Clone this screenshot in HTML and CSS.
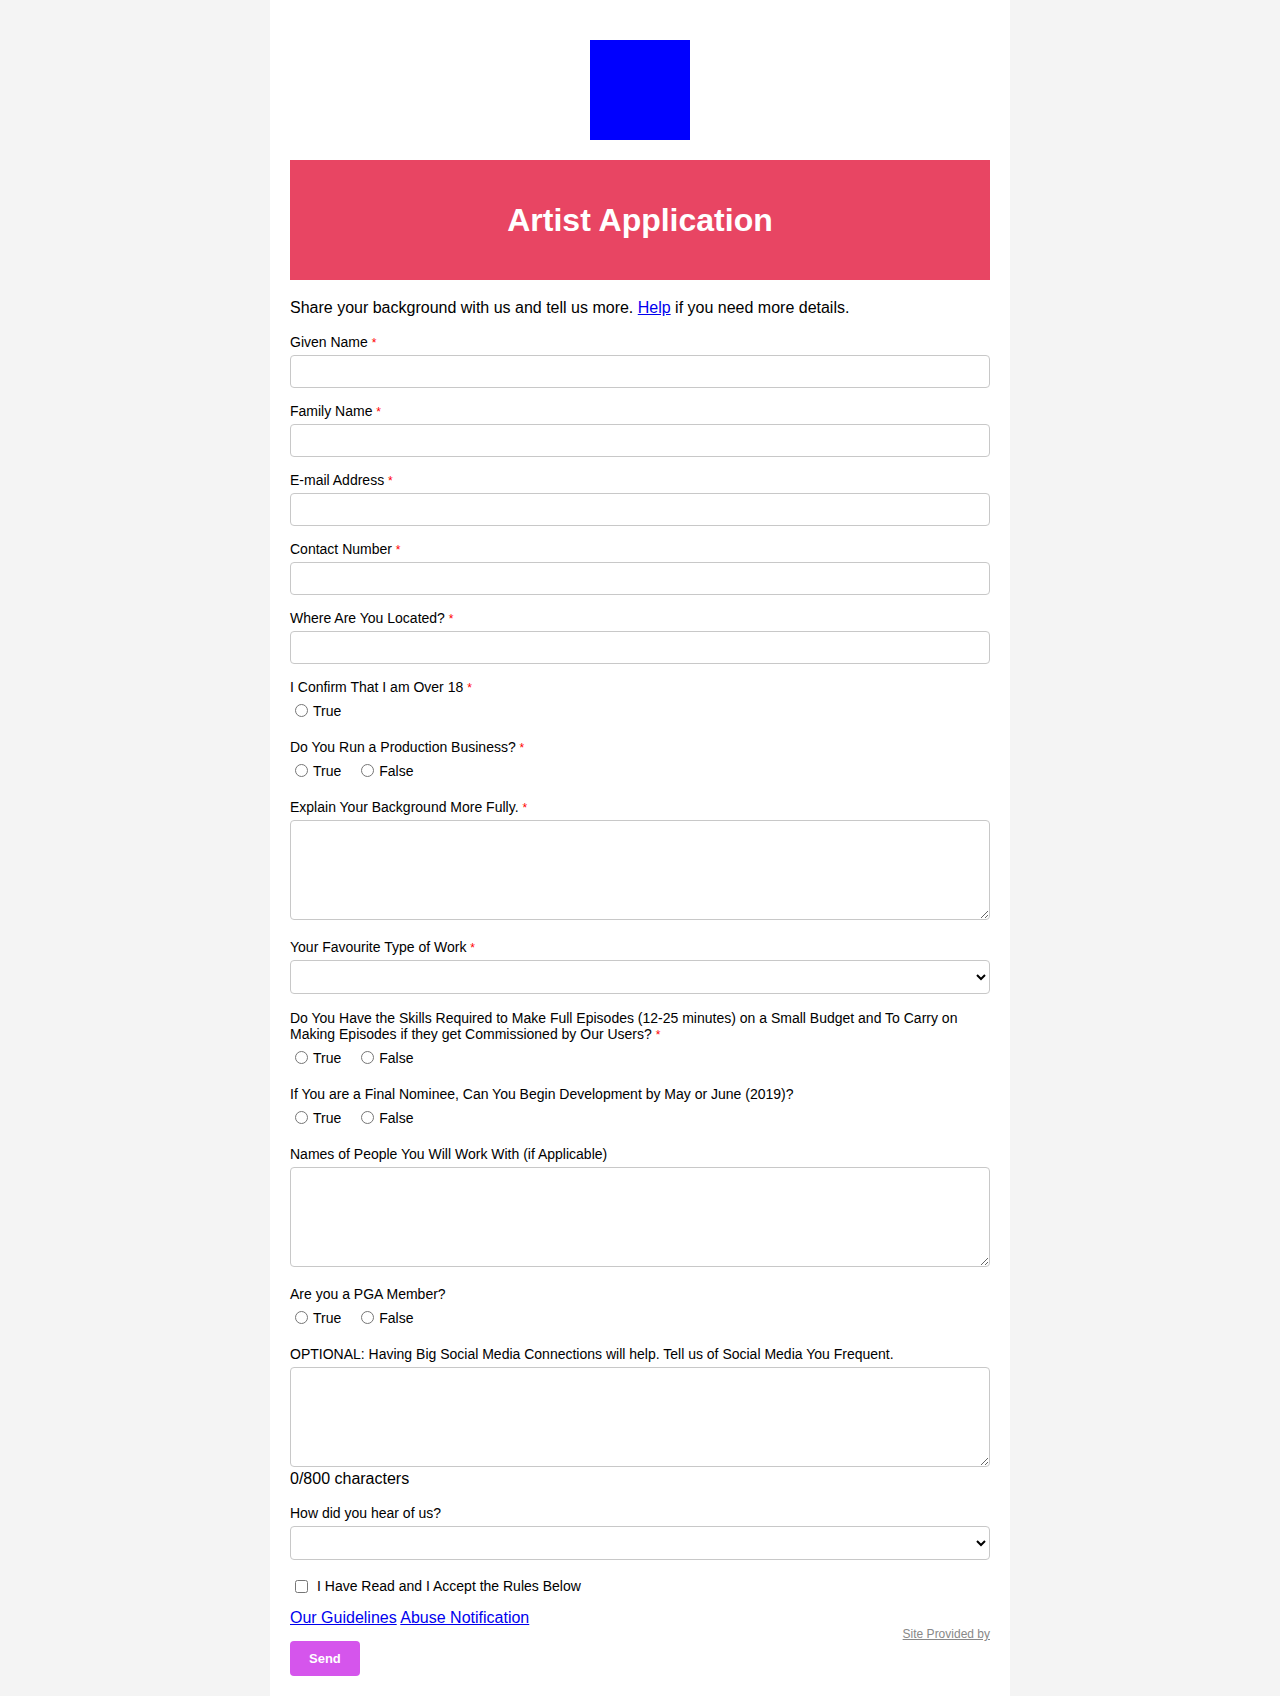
FILE: index.html
```html
<!DOCTYPE html>
<html lang="en">
<head>
<meta charset="utf-8">
<title>Artist Application</title>
<link rel="stylesheet" href="styles.css">
</head>
<body>
<div class="page">
  <div class="logo-wrap"><div class="logo"></div></div>
  <div class="banner"><h1>Artist Application</h1></div>
  <p class="intro">Share your background with us and tell us more. <a href="#">Help</a> if you need more details.</p>
  <form class="form">
    <div class="field">
      <label class="q">Given Name <span class="req">*</span></label>
      <input class="text" type="text">
    </div>
    <div class="field">
      <label class="q">Family Name <span class="req">*</span></label>
      <input class="text" type="text">
    </div>
    <div class="field">
      <label class="q">E-mail Address <span class="req">*</span></label>
      <input class="text" type="text">
    </div>
    <div class="field">
      <label class="q">Contact Number <span class="req">*</span></label>
      <input class="text" type="text">
    </div>
    <div class="field">
      <label class="q">Where Are You Located? <span class="req">*</span></label>
      <input class="text" type="text">
    </div>
    <div class="field field-radio">
      <label class="q">I Confirm That I am Over 18 <span class="req">*</span></label>
      <div class="options">
        <label class="opt"><input type="radio" name="r1"><span>True</span></label>
      </div>
    </div>
    <div class="field field-radio">
      <label class="q">Do You Run a Production Business? <span class="req">*</span></label>
      <div class="options">
        <label class="opt"><input type="radio" name="r2"><span>True</span></label>
        <label class="opt"><input type="radio" name="r2"><span>False</span></label>
      </div>
    </div>
    <div class="field field-area">
      <label class="q">Explain Your Background More Fully. <span class="req">*</span></label>
      <textarea class="area"></textarea>
    </div>
    <div class="field field-select">
      <label class="q">Your Favourite Type of Work <span class="req">*</span></label>
      <select class="select"><option></option></select>
    </div>
    <div class="field field-radio">
      <label class="q">Do You Have the Skills Required to Make Full Episodes (12-25 minutes) on a Small Budget and To Carry on Making Episodes if they get Commissioned by Our Users? <span class="req">*</span></label>
      <div class="options">
        <label class="opt"><input type="radio" name="r3"><span>True</span></label>
        <label class="opt"><input type="radio" name="r3"><span>False</span></label>
      </div>
    </div>
    <div class="field field-radio">
      <label class="q">If You are a Final Nominee, Can You Begin Development by May or June (2019)?</label>
      <div class="options">
        <label class="opt"><input type="radio" name="r4"><span>True</span></label>
        <label class="opt"><input type="radio" name="r4"><span>False</span></label>
      </div>
    </div>
    <div class="field field-area">
      <label class="q">Names of People You Will Work With (if Applicable)</label>
      <textarea class="area"></textarea>
    </div>
    <div class="field field-radio">
      <label class="q">Are you a PGA Member?</label>
      <div class="options">
        <label class="opt"><input type="radio" name="r5"><span>True</span></label>
        <label class="opt"><input type="radio" name="r5"><span>False</span></label>
      </div>
    </div>
    <div class="field field-count">
      <label class="q">OPTIONAL: Having Big Social Media Connections will help. Tell us of Social Media You Frequent.</label>
      <textarea class="area"></textarea>
      <div class="counter">0/800 characters</div>
    </div>
    <div class="field field-select-last">
      <label class="q">How did you hear of us?</label>
      <select class="select"><option></option></select>
    </div>
    <div class="check-row">
      <label class="check"><input type="checkbox"><span>I Have Read and I Accept the Rules Below</span></label>
    </div>
    <p class="links"><a href="#">Our Guidelines</a> <a href="#">Abuse Notification</a></p>
    <div class="provided"><a href="#">Site Provided by</a></div>
    <button class="send" type="button">Send</button>
  </form>
</div>
</body>
</html>
```

FILE: styles.css
```css
html, body {
  margin: 0;
  padding: 0;
}

body {
  background: #f4f4f4;
  font-family: "Liberation Sans", Arial, Helvetica, sans-serif;
  color: #000;
}

.page {
  width: 740px;
  margin: 0 auto;
  background: #fff;
  padding: 40px 20px 20px;
  box-sizing: border-box;
  min-height: 1696px;
}

.logo-wrap {
  display: flex;
  justify-content: center;
  margin-bottom: 20px;
}

.logo {
  width: 100px;
  height: 100px;
  background: #0000ff;
}

.banner {
  height: 120px;
  background: #e84563;
  display: flex;
  align-items: center;
  justify-content: center;
}

.banner h1 {
  margin: 0;
  color: #fff;
  font-size: 32px;
  font-weight: bold;
  line-height: 37px;
}

.intro {
  font-size: 16px;
  line-height: 18px;
  margin: 19px 0 17px;
}

a {
  color: #0000ee;
}

.form {
  margin: 0;
}

.field {
  margin-bottom: 15px;
}

.field-radio {
  margin-bottom: 18px;
}

.field-area {
  margin-bottom: 19px;
}

.field-select {
  margin-bottom: 16px;
}

.field-count {
  margin-bottom: 17px;
}

.field-select-last {
  margin-bottom: 18px;
}

.q {
  display: block;
  font-size: 14px;
  line-height: 16px;
  height: auto;
  margin-bottom: 5px;
}

.req {
  color: #ff0000;
  font-size: 12px;
  line-height: 0;
}

.text {
  display: block;
  width: 100%;
  height: 33px;
  box-sizing: border-box;
  border: 1px solid #c8c8c8;
  border-radius: 4px;
  padding: 6px 8px;
  font-size: 14px;
  font-family: inherit;
  margin: 0;
  background: #fff;
}

.area {
  display: block;
  width: 100%;
  height: 100px;
  box-sizing: border-box;
  border: 1px solid #c8c8c8;
  border-radius: 4px;
  padding: 6px 8px;
  font-size: 14px;
  font-family: inherit;
  margin: 0;
  background: #fff;
}

.select {
  display: block;
  width: 100%;
  height: 34px;
  box-sizing: border-box;
  border: 1px solid #c8c8c8;
  border-radius: 4px;
  padding: 4px 6px;
  font-size: 14px;
  font-family: inherit;
  margin: 0;
  background: #fff;
  color: #000;
}

.options {
  display: flex;
  align-items: center;
  height: 21px;
}

.opt {
  display: inline-flex;
  align-items: center;
  font-size: 14px;
  line-height: 16px;
  margin-right: 15px;
}

.opt input {
  width: 13px;
  height: 13px;
  margin: 0 5px 0 5px;
}

.counter {
  font-size: 16px;
  line-height: 18px;
  margin-top: 3px;
}

.check-row {
  display: flex;
  align-items: center;
  height: 16px;
  margin-bottom: 15px;
}

.check {
  display: inline-flex;
  align-items: center;
  font-size: 14px;
  line-height: 16px;
}

.check input {
  width: 13px;
  height: 13px;
  margin: 0 9px 0 5px;
}

.links {
  font-size: 16px;
  line-height: 18px;
  margin: 0;
}

.provided {
  text-align: right;
  font-size: 12px;
  line-height: 14px;
}

.provided a {
  color: #888;
}

.send {
  display: block;
  height: 35px;
  padding: 0 19px;
  background: #d555ec;
  color: #fff;
  border: none;
  border-radius: 4px;
  font-family: inherit;
  font-size: 13px;
  font-weight: bold;
  margin: 0;
}
```
